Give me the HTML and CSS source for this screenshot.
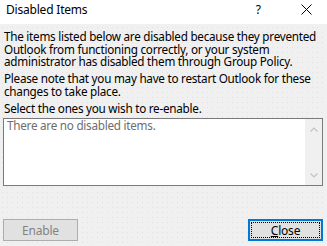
FILE: index.html
```
<!DOCTYPE html>
<html>
<head>
<meta charset="utf-8">
<link rel="stylesheet" href="styles.css">
</head>
<body>
<div class="dialog">
  <div class="titlebar">
    <span class="title">Disabled Items</span>
    <span class="help">?</span>
    <svg class="close-x" width="11" height="11" viewBox="0 0 11 11"><path d="M0.5 0.5 L10.5 10.5 M10.5 0.5 L0.5 10.5" stroke="#000" stroke-width="1" fill="none"/></svg>
  </div>
  <div class="content">
    <p class="para">The items listed below are disabled because they prevented<br>Outlook from functioning correctly, or your system<br>administrator has disabled them through Group Policy.</p>
    <p class="para">Please note that you may have to restart Outlook for these<br>changes to take place.</p>
    <p class="para">Select the ones you wish to re-enable.</p>
    <div class="listbox">
      <div class="list-text">There are no disabled items.</div>
      <div class="scrollbar">
        <svg width="8" height="5" viewBox="0 0 8 5"><path d="M0.5 4.5 L4 1 L7.5 4.5" stroke="#c2c2c2" stroke-width="1.2" fill="none"/></svg>
        <svg width="8" height="5" viewBox="0 0 8 5"><path d="M0.5 0.5 L4 4 L7.5 0.5" stroke="#c2c2c2" stroke-width="1.2" fill="none"/></svg>
      </div>
    </div>
    <div class="buttons">
      <button class="btn btn-disabled">Enable</button>
      <button class="btn btn-default"><span class="focus"><u>C</u>lose</span></button>
    </div>
  </div>
</div>
</body>
</html>
```
FILE: styles.css
```
html, body {
  margin: 0;
  padding: 0;
}
body {
  width: 327px;
  height: 246px;
  overflow: hidden;
  font-family: "Noto Sans", "Open Sans", sans-serif;
  font-size: 11.7px;
  color: #000;
}
.dialog {
  width: 327px;
  height: 246px;
  display: flex;
  flex-direction: column;
  background-color: #f0f0f0;
  background-image: radial-gradient(circle, #e2e2e2 0.6px, transparent 0.9px);
  background-size: 5px 5px;
}
.titlebar {
  height: 24px;
  background: #fff;
  display: flex;
  align-items: center;
  padding-left: 6px;
  flex: none;
}
.title {
  font-size: 12px;
  flex: 1;
  margin-top: -5px;
  letter-spacing: -0.2px;
}
.help {
  font-size: 12px;
  margin-right: 40px;
  margin-top: -5px;
}
.close-x {
  margin-right: 15px;
  margin-top: -5px;
}
.content {
  flex: 1;
  display: flex;
  flex-direction: column;
  padding: 6px 4px 5px 3px;
}
.para {
  margin: 0 0 4.5px 1px;
  line-height: 12.5px;
  white-space: nowrap;
  letter-spacing: -0.25px;
}
.para:last-of-type {
  margin-bottom: 4px;
}
.listbox {
  height: 66px;
  border: 1px solid #7a7a7a;
  background: #fff;
  display: flex;
}
.list-text {
  flex: 1;
  color: #6d6d6d;
  padding: 0 0 0 3px;
  line-height: 13px;
  letter-spacing: -0.25px;
}
.scrollbar {
  width: 17px;
  background: #f0f0f0;
  display: flex;
  flex-direction: column;
  justify-content: space-between;
  align-items: center;
  padding: 8px 0 7px;
}
.scrollbar svg {
  display: block;
}
.buttons {
  margin-top: auto;
  display: flex;
  justify-content: space-between;
}
.btn {
  width: 75px;
  height: 22px;
  font-family: inherit;
  font-size: 12px;
  padding: 0;
  margin: 0;
  background: #e1e1e1;
  display: flex;
  align-items: center;
  justify-content: center;
  letter-spacing: -0.2px;
}
.btn-disabled {
  border: 1px solid #adadad;
  color: #838383;
}
.btn-default {
  border: 2px solid #0078d7;
  color: #000;
  padding: 1px;
}
.focus {
  flex: 1;
  align-self: stretch;
  border: 1px dotted #000;
  display: flex;
  align-items: center;
  justify-content: center;
}
```
